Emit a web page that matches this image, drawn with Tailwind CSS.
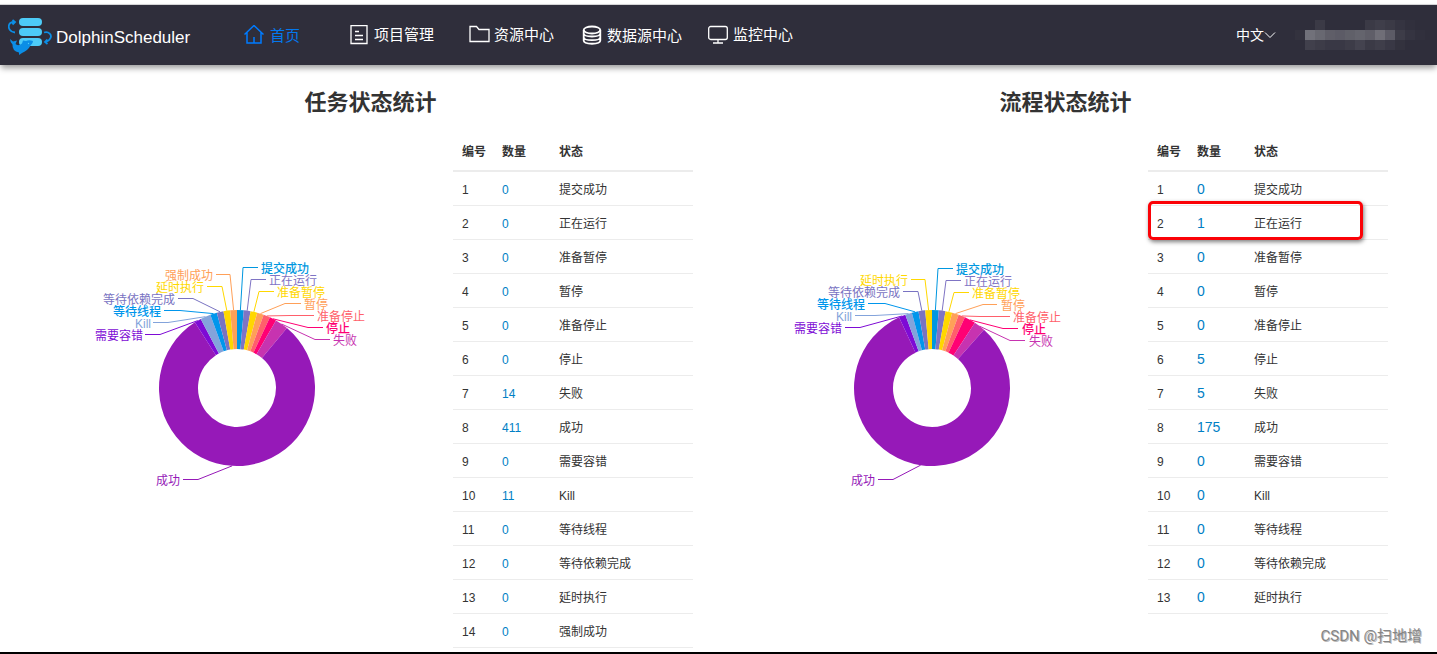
<!DOCTYPE html>
<html lang="zh-CN">
<head>
<meta charset="utf-8">
<meta name="viewport" content="width=device-width, initial-scale=1">
<title>DolphinScheduler</title>
<script src="https://cdn.jsdelivr.net/npm/@tailwindcss/browser@4"></script>
</head>
<body class="flex min-h-screen flex-col bg-white font-['Liberation_Sans','Noto_Sans_CJK_SC',sans-serif] text-[#333]">
<header class="mt-1 flex items-center border-t border-[#d4d4d6] bg-[#2f2e3b] text-[15px] leading-5 text-white shadow-[0_4px_6px_-1px_rgba(0,0,0,0.4)]">
  <a href="#" class="flex h-[60px] w-[244px] shrink-0 items-center gap-1 pl-2 text-[17px]">
    <svg class="h-10 w-11" viewBox="0 0 44 40" fill="none" aria-hidden="true">
      <g fill="#4dcbf7"><rect x="11" y="3" width="23" height="8" rx="4"/><rect x="11" y="13" width="23" height="8" rx="4"/><rect x="11" y="23" width="23" height="8" rx="4"/></g>
      <path d="M7 17.500C2 17 0 13 1 10Q2 7 6 7M4.500 5L7 7L4.500 9.500" stroke="#0b8ee6" stroke-width="1.800"/>
      <path d="M36 17.500C41 16 44 20 42.500 23Q41 26.500 37 27M39.500 24.500L37 27L39.500 29" stroke="#0b8ee6" stroke-width="1.800"/>
      <path d="M2 24L5 26.500L9 25.500L7.500 29Q10 31.500 14 28.500L15 25.500L18 26Q21 24.500 25 26L24.500 28L22.500 30.500Q20 35.500 14 38L11 40L11 37.500Q4 36 4.500 29.500Q2 27 2 24Z" fill="#0b8ee6"/>
      <circle cx="20.500" cy="28.500" r=".7" fill="#4dcbf7"/>
    </svg>
    <span class="pt-[6px]">DolphinScheduler</span>
  </a>
  <nav class="flex items-center">
    <a href="#" class="flex items-center gap-[6px] text-[#0478ee]">
      <svg class="h-5 w-5" viewBox="0 0 20 20" fill="none" stroke="#007bff" stroke-width="1.500" aria-hidden="true"><path d="M.5 9.500L10 .5L19.500 9.500M3 7.500V18H17V7.500M10 12V18"/></svg>
      <span class="pt-[2px]">首页</span></a>
    <a href="#" class="ml-[50px] flex items-center gap-[6px]">
      <svg class="h-5 w-[18px]" viewBox="0 0 18 20" fill="none" stroke="currentColor" stroke-width="1.300" aria-hidden="true"><path d="M1 .7H17V18.500H1ZM5 6.500H9M5 10.500H13M5 14.500H13"/></svg>
      <span>项目管理</span></a>
    <a href="#" class="ml-[35px] flex items-center gap-1">
      <svg class="h-5 w-[21px]" viewBox="0 0 21 20" fill="none" stroke="currentColor" stroke-width="1.300" aria-hidden="true"><path d="M1 1.500H7.500L10 4.500H20V16.500H1Z"/></svg>
      <span>资源中心</span></a>
    <a href="#" class="ml-7 flex items-center gap-[5px]">
      <svg class="h-5 w-5" viewBox="0 0 20 20" fill="none" stroke="currentColor" stroke-width="1.800" aria-hidden="true"><ellipse cx="10" cy="5" rx="8.300" ry="3.500"/><path d="M1.700 5V15.500C1.700 19.800 18.300 19.800 18.300 15.500V5M1.700 8.500C2 12.500 18 12.500 18.300 8.500M1.700 12.200C2 16.200 18 16.200 18.300 12.200"/></svg>
      <span class="pt-[2px]">数据源中心</span></a>
    <a href="#" class="ml-[26px] flex items-center gap-[5px]">
      <svg class="h-5 w-5" viewBox="0 0 20 20" fill="none" stroke="currentColor" stroke-width="1.300" aria-hidden="true"><rect x=".7" y="1.500" width="18.600" height="13" rx="2"/><path d="M10 14.500V18M5 18H15"/></svg>
      <span>监控中心</span></a>
  </nav>
  <div class="ml-auto flex items-center pr-3">
    <button type="button" class="flex items-center text-[14px]">中文
      <svg class="h-3 w-3" viewBox="0 0 12 12" fill="none" stroke="currentColor" aria-hidden="true"><path d="M1 3.500L6 8.500L11 3.500"/></svg></button>
    <svg class="ml-[19px] h-[30px] w-[130px]" viewBox="0 0 13 3" fill="white" shape-rendering="crispEdges" aria-hidden="true" id="masked-user"></svg>
  </div>
</header>

<main class="flex grow pl-[23px] pr-6">
  <section class="flex-1">
    <h2 class="pb-[13px] pt-[22px] text-center text-[22px] font-bold leading-8">任务状态统计</h2>
    <div class="flex pr-[25px]">
      <div class="flex min-w-0 flex-1 justify-center"><svg id="task-pie" class="h-[400px] w-[430px]" viewBox="23 132 430 400" role="img" aria-label="任务状态统计"></svg></div>
      <div class="w-[240px] shrink-0">
        <table class="w-full table-fixed border-separate border-spacing-0 text-left text-[12px] leading-4">
          <thead><tr class="h-10"><th class="w-10 border-b-2 border-[#ececec] pl-[9px] pt-[2px] font-bold">编号</th><th class="w-[57px] border-b-2 border-[#ececec] pl-[9px] pt-[2px] font-bold">数量</th><th class="border-b-2 border-[#ececec] pl-[9px] pt-[2px] font-bold">状态</th></tr></thead>
          <tbody id="task-rows"></tbody>
        </table>
      </div>
    </div>
  </section>
  <section class="flex-1">
    <h2 class="pb-[13px] pt-[22px] text-center text-[22px] font-bold leading-8">流程状态统计</h2>
    <div class="flex pr-[25px]">
      <div class="flex min-w-0 flex-1 justify-center"><svg id="process-pie" class="h-[400px] w-[430px]" viewBox="23 132 430 400" role="img" aria-label="流程状态统计"></svg></div>
      <div class="relative w-[240px] shrink-0">
        <table class="w-full table-fixed border-separate border-spacing-0 text-left text-[12px] leading-4">
          <thead><tr class="h-10"><th class="w-10 border-b-2 border-[#ececec] pl-[9px] pt-[2px] font-bold">编号</th><th class="w-[57px] border-b-2 border-[#ececec] pl-[9px] pt-[2px] font-bold">数量</th><th class="border-b-2 border-[#ececec] pl-[9px] pt-[2px] font-bold">状态</th></tr></thead>
          <tbody id="process-rows"></tbody>
        </table>
        <div class="pointer-events-none absolute left-0 top-[69px] h-[39px] w-[215px] rounded-[5px] border-3 border-[#fb0207] shadow-[1px_2px_4px_rgba(0,0,0,0.5)]"></div>
      </div>
    </div>
  </section>
</main>
<div class="mt-1 h-[2px] bg-black"></div>
<div class="absolute bottom-2 right-[15px] font-['Roboto','Noto_Sans_CJK_SC',sans-serif] text-[15px] leading-5 text-[#858585] [text-shadow:1px_1px_0_#bbb]">CSDN @扫地增</div>

<script>
const names = ['提交成功','正在运行','准备暂停','暂停','准备停止','停止','失败','成功','需要容错','Kill','等待线程','等待依赖完成','延时执行','强制成功'];
const colors = ['#0097e0','#7f74c4','#ffd700','#ffa058','#ff5f6b','#ff0074','#c733b0','#9619b8','#7e0bd5','#83a3db','#0096ec','#7973c2','#ffd800','#ffa058'];
function rows(id, counts, linkClass) {
  document.getElementById(id).innerHTML = counts.map((n, i) =>
    `<tr class="h-[34px]"><td class="border-b border-[#ececec] pl-[9px] pt-[2px]">${i + 1}</td><td class="border-b border-[#ececec] pl-[9px] pt-[2px]"><a href="#" class="${linkClass}">${n}</a></td><td class="border-b border-[#ececec] pl-[9px] pt-[2px]">${names[i]}</td></tr>`).join('');
}
rows('task-rows', [0,0,0,0,0,0,14,411,0,11,0,0,0,0], 'text-[#0080c5]');
rows('process-rows', [0,1,0,0,0,5,5,175,0,0,0,0,0], 'text-[14px] text-[#0080c5]');

// Labels: [elbow x, line end x, y, text x]
function pie(id, sweeps, labels) {
  const cx = 237, cy = 388, R = 78, r = 39;
  const at = (a, q) => { const t = a * Math.PI / 180; return (cx + q * Math.sin(t)).toFixed(2) + ' ' + (cy - q * Math.cos(t)).toFixed(2); };
  let a = 0, slices = '', lines = '', texts = '';
  sweeps.forEach((s, i) => {
    const b = a + s, big = s > 180 ? 1 : 0, [ex, lx, y, tx] = labels[i];
    slices += `<path fill="${colors[i]}" d="M${at(a, R)}A${R} ${R} 0 ${big} 1 ${at(b, R)}L${at(b, r)}A${r} ${r} 0 ${big} 0 ${at(a, r)}Z"/>`;
    lines += `<path fill="none" stroke="${colors[i]}" d="M${at((a + b) / 2, R)}L${ex} ${y}H${lx}"/>`;
    texts += `<text x="${tx}" y="${y + 5}" fill="${colors[i]}" class="${[0, 5, 10].includes(i) ? 'text-[12px] font-medium' : 'text-[12px]'}" text-anchor="${tx < cx ? 'end' : 'start'}">${names[i]}</text>`;
    a = b;
  });
  document.getElementById(id).innerHTML = slices + lines + texts;
}
pie('task-pie', [5,5,5,5,5,5,9.8,287.5,5,7.7,5,5,5,5], [
  [243,258,267.5,261],[251,266,279.5,269],[259,274,291.5,277],[285,301,303.5,304],[290,314,315.5,317],[308,323,327.5,326],[315,330,339.5,333],
  [198,183,479.5,180],[160,145,334.5,143],[168,153,322.5,151],[180,164,310.5,161],[193,178,298.5,175],[222,207,286.5,204],[230,216,274.5,213]]);
pie('process-pie', [5,5,5,5,5,8.38,8.38,293.24,5,5,5,5,5], [
  [243,258,268.5,261],[251,266,280.5,269],[259,274,292.5,277],[288,302,304.5,306],[285,315,316.5,318],[308,323,328.5,327],[315,330,340.5,334],
  [198,183,479.5,180],[165,150,327.5,147],[180,160,315.5,157],[190,173,303.5,170],[223,208,291.5,205],[230,216,279.5,213]]);

// Pixelated block over the account name, opacity in percent per cell
const mask = [[0,0,6,0,0,0,0,6,8,6,3,1,0],[2,32,28,23,22,24,26,23,31,22,7,3,1],[0,9,7,5,5,7,10,6,8,5,2,0,0]];
document.getElementById('masked-user').innerHTML = mask.map((row, y) => row.map((o, x) => `<rect x="${x}" y="${y}" width="1" height="1" fill-opacity="${o / 100}"/>`).join('')).join('');
</script>
</body>
</html>
